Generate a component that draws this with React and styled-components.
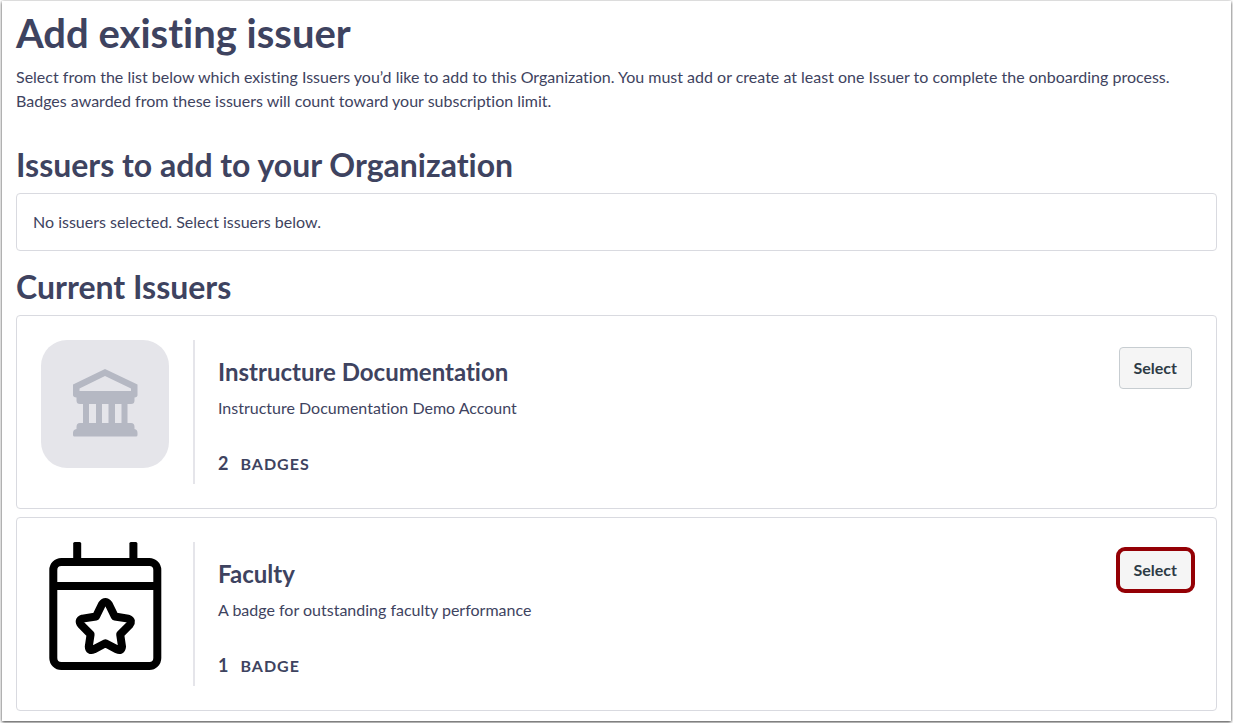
import React from 'react';
import styled, { createGlobalStyle, css } from 'styled-components';

const GlobalStyle = createGlobalStyle`
* {
    box-sizing: border-box;
}

body {
    margin: 0;
    background: #ffffff;
    color: #3e4360;
    font-family: Lato, "Liberation Sans", sans-serif;
    font-size: 16px;
    line-height: 24px;
    font-variant-ligatures: none;
}
`;

const Page = styled.main`
margin: 1px 2px 2px;
padding: 8px 14px 10px;
background: #ffffff;
box-shadow: 0 1px 3px rgba(0, 0, 0, 0.8);
`;

const Title = styled.h1`
margin: 0 0 8px;
font-size: 40px;
line-height: 48px;
font-weight: bold;
`;

const Intro = styled.p`
margin: 0 0 32px;
max-width: 1160px;
`;

const Heading = styled.h2`
margin: 0 0 8px;
font-size: 32px;
line-height: 40px;
font-weight: bold;
`;

const EmptyBox = styled.div`
margin-bottom: 16px;
padding: 16px;
border: 1px solid #d9dae0;
border-radius: 4px;
`;

const IssuerList = styled.ul`
display: flex;
flex-direction: column;
gap: 8px;
margin: 0;
padding: 0;
list-style: none;
`;

const Card = styled.li`
display: flex;
align-items: flex-start;
padding: 24px;
border: 1px solid #d9dae0;
border-radius: 4px;
`;

const Logo = styled.svg`
flex: none;
display: block;
width: 128px;
height: 128px;
`;

const Details = styled.div`
flex: 1;
min-width: 0;
margin-left: 24px;
padding: 16px 0 8px 23px;
border-left: 2px solid #e5e5ea;
`;

const Name = styled.h3`
margin: 0 0 8px;
font-size: 24px;
line-height: 32px;
font-weight: bold;
`;

const Description = styled.p`
margin: 0 0 32px;
`;

const Count = styled.p`
display: flex;
align-items: baseline;
gap: 12px;
margin: 0;
font-weight: bold;
`;

const CountNumber = styled.span`
font-size: 18px;
line-height: 20px;
`;

const CountLabel = styled.span`
letter-spacing: 1px;
text-transform: uppercase;
`;

const highlight = css`
&::after {
    content: "";
    position: absolute;
    inset: -3px -4px;
    border: 4px solid #940005;
    border-radius: 9px;
    pointer-events: none;
}
`;

const SelectButton = styled.button`
position: relative;
flex: none;
margin-top: 7px;
padding: 8px 14px;
border: 1px solid #c7cdd1;
border-radius: 4px;
background: #f5f5f5;
color: #2d3b45;
font: bold 16px/24px Lato, "Liberation Sans", sans-serif;
cursor: pointer;
${({ $highlighted }) => $highlighted && highlight}
`;

const InstitutionLogo = () => (
    <Logo viewBox="0 0 128 128" aria-hidden="true">
        <rect width="128" height="128" rx="26" fill="#e5e5ea" />
        <path
            fill="#b5b8c3"
            fillRule="evenodd"
            d="M64 29L96.500 44.500V55Q96.500 57 93.500 57.500V60.500Q93.500 64 90 64H86.500V83H90Q93.500 83 93.500 87V89Q96.500 89.500 96.500 93V95Q96.500 96.500 95 96.500H33.500Q32 96.500 32 95V93Q32 89.500 35.500 89V87Q35.500 83 39 83H42V64H39Q35.500 64 35.500 60.500V57.500Q32 57 32 55V44.500ZM64 36L38.500 48.500V51H90V48.500ZM48 64V83H55V64ZM61 64V83H67.500V64ZM74 64V83H80.500V64Z"
        />
    </Logo>
);

const CalendarLogo = () => (
    <Logo viewBox="0 0 128 128" aria-hidden="true" fill="none" stroke="#000000" strokeWidth="8">
        <rect x="32.200" width="8" height="20" rx="1.500" fill="#000000" stroke="none" />
        <rect x="88.400" width="8" height="20" rx="1.500" fill="#000000" stroke="none" />
        <rect x="12.300" y="20" width="104" height="104" rx="8" />
        <path d="M12 44h104" />
        <path
            strokeLinejoin="round"
            d="M61 62.300Q64.400 57.500 67.800 62.300L73.800 74.500L87.200 76.600Q92 78.500 88.500 83L79.200 92.300L81 104.500Q80.500 109.500 76 107.400L64.400 101.200L52.800 107.400Q48 109.500 47.800 104.500L49.600 92.300L40.300 83Q36.500 78.500 41.600 76.600L55 74.500Z"
        />
    </Logo>
);

const issuers = [
    {
        id: 1,
        name: 'Instructure Documentation',
        description: 'Instructure Documentation Demo Account',
        badges: 2,
        logo: InstitutionLogo,
        highlighted: false,
    },
    {
        id: 2,
        name: 'Faculty',
        description: 'A badge for outstanding faculty performance',
        badges: 1,
        logo: CalendarLogo,
        highlighted: true,
    },
];

const IssuerCard = ({ issuer }) => {
    const IssuerLogo = issuer.logo;

    return (
        <Card>
            <IssuerLogo />
            <Details>
                <Name id={`issuer-${issuer.id}`}>{issuer.name}</Name>
                <Description>{issuer.description}</Description>
                <Count>
                    <CountNumber>{issuer.badges}</CountNumber>
                    <CountLabel>{issuer.badges === 1 ? 'Badge' : 'Badges'}</CountLabel>
                </Count>
            </Details>
            <SelectButton
                type="button"
                aria-describedby={`issuer-${issuer.id}`}
                $highlighted={issuer.highlighted}
            >
                Select
            </SelectButton>
        </Card>
    );
};

const App = () => (
    <>
        <GlobalStyle />
        <Page>
            <Title>Add existing issuer</Title>
            <Intro>
                Select from the list below which existing Issuers you’d like to add to this Organization. You must add or create at least one Issuer to complete the onboarding process. Badges awarded from these issuers will count toward your subscription limit.
            </Intro>
            <Heading>Issuers to add to your Organization</Heading>
            <EmptyBox>No issuers selected. Select issuers below.</EmptyBox>
            <Heading>Current Issuers</Heading>
            <IssuerList>
                {issuers.map(issuer => (
                    <IssuerCard key={issuer.id} issuer={issuer} />
                ))}
            </IssuerList>
        </Page>
    </>
);

export default App;
